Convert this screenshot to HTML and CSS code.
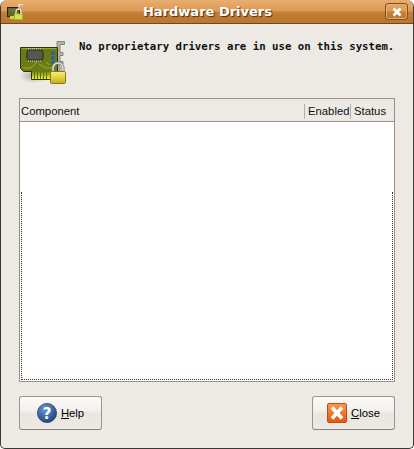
FILE: index.html
```html
<!DOCTYPE html>
<html lang="en">
<head>
    <meta charset="UTF-8">
    <link rel="stylesheet" href="styles.css">
    <title>Hardware Drivers</title>
</head>
<body>
    <div class="window">
        <div class="titlebar">
            <svg class="title-icon" width="16" height="16" viewBox="0 0 16 16">
                <rect x="0.500" y="3.500" width="12" height="9" fill="#5d6c16" stroke="#23270a"/>
                <rect x="2" y="5" width="7" height="3" fill="#6a6a64"/>
                <path d="M3 13.500h6" stroke="#cfd835" stroke-width="3"/>
                <path d="M12 6V0.500h4" stroke="#e8e6e0" fill="none" stroke-width="1.400"/>
                <rect x="7.500" y="10" width="8" height="5.500" fill="#dce34a" stroke="#a8b02a"/>
                <path d="M9 10V7.500a2.500 2.500 0 0 1 5 0V10" stroke="#eeece6" fill="none" stroke-width="1.200"/>
            </svg>
            <span class="title-text">Hardware Drivers</span>
            <div class="title-close">
                <svg width="12" height="12" viewBox="0 0 12 12"><path d="M2.500 2.500l7 7M9.500 2.500l-7 7" stroke="#fff" stroke-width="2.800"/></svg>
            </div>
        </div>
        <div class="content">
            <div class="message">
                <svg class="hw-icon" width="50" height="50" viewBox="0 0 50 50">
                    <defs>
                        <linearGradient id="teeth" x1="0" y1="0" x2="0" y2="1">
                            <stop offset="0" stop-color="#7c8c14"/>
                            <stop offset="1" stop-color="#f2f23a"/>
                        </linearGradient>
                        <linearGradient id="lockBody" x1="0" y1="0" x2="0" y2="1">
                            <stop offset="0" stop-color="#f4ec8c"/>
                            <stop offset="0.500" stop-color="#e2d23c"/>
                            <stop offset="1" stop-color="#c4ac1c"/>
                        </linearGradient>
                        <radialGradient id="boardShadow">
                            <stop offset="0" stop-color="#a8a59f"/>
                            <stop offset="1" stop-color="#edeae5"/>
                        </radialGradient>
                    </defs>
                    <ellipse cx="15" cy="36" rx="15" ry="7" fill="url(#boardShadow)"/>
                    <path d="M38 1.500h7.500v3H41v8h3v3h-3v6h3v3h-3v8h-3z" fill="#b4b4ae" stroke="#77776f" stroke-width="0.800"/>
                    <path d="M1.500 7.500H38.500V31.500H32.500V39.500H12.500V31.500H4.500L1.500 28.500z" fill="#6b7b14" stroke="#2e3308"/>
                    <path d="M2.500 8.500H37.500" stroke="#97a62c"/>
                    <path d="M13 32h19v7H13z" fill="url(#teeth)"/>
                    <path d="M15.500 32v7M18.500 32v7M21.500 32v7M24.500 32v7M27.500 32v7" stroke="#5f6c0e"/>
                    <path d="M4 28h8l6-6M20 24l7 4h8M27 22l4 3" stroke="#9dac2a" fill="none"/>
                    <path d="M9.500 8.500v1.500M11.500 8.500v1.500M13.500 8.500v1.500M15.500 8.500v1.500M17.500 8.500v1.500M19.500 8.500v1.500M21.500 8.500v1.500M9.500 20v1.500M11.500 20v1.500M13.500 20v1.500M15.500 20v1.500M17.500 20v1.500M19.500 20v1.500M21.500 20v1.500" stroke="#e4e4e0"/>
                    <rect x="8" y="10" width="16" height="10" rx="2" fill="#55584f" stroke="#26271f"/>
                    <circle cx="34" cy="13" r="2" fill="#2b5ea8"/>
                    <circle cx="34" cy="18" r="2" fill="#2b5ea8"/>
                    <circle cx="34" cy="23" r="2" fill="#2b5ea8"/>
                    <path d="M34 31v-3a5 5 0 0 1 10 0v3" stroke="#7f7f78" stroke-width="3" fill="none"/>
                    <path d="M34 31v-3a5 5 0 0 1 10 0v3" stroke="#e2e2dc" stroke-width="1.400" fill="none"/>
                    <rect x="31.500" y="31.500" width="15" height="12" rx="1" fill="url(#lockBody)" stroke="#8a7a14"/>
                </svg>
                <p class="message-text">No proprietary drivers are in use on this system.</p>
            </div>
            <div class="list">
                <div class="list-head">
                    <div class="col col-component">Component</div>
                    <div class="col col-enabled">Enabled</div>
                    <div class="col col-status">Status</div>
                </div>
                <div class="list-body">
                    <div class="list-spacer"></div>
                    <div class="list-focus"></div>
                </div>
            </div>
            <div class="actions">
                <button class="btn">
                    <svg width="20" height="20" viewBox="0 0 20 20">
                        <defs>
                            <radialGradient id="helpBlue" cx="0.4" cy="0.3" r="0.8">
                                <stop offset="0" stop-color="#6b9ad8"/>
                                <stop offset="1" stop-color="#17386f"/>
                            </radialGradient>
                        </defs>
                        <circle cx="10" cy="10" r="9.600" fill="url(#helpBlue)" stroke="#2c4670" stroke-width="0.800"/>
                        <text x="10" y="16" class="help-mark">?</text>
                    </svg>
                    <span><u>H</u>elp</span>
                </button>
                <button class="btn">
                    <svg width="20" height="20" viewBox="0 0 20 20">
                        <defs>
                            <linearGradient id="closeOrange" x1="0" y1="0" x2="0" y2="1">
                                <stop offset="0" stop-color="#f99a50"/>
                                <stop offset="1" stop-color="#e2560c"/>
                            </linearGradient>
                        </defs>
                        <rect x="0.500" y="0.500" width="19" height="19" rx="1.500" fill="url(#closeOrange)" stroke="#b9510f"/>
                        <path d="M5 4.500l10 11M15 4.500l-10 11" stroke="#fff" stroke-width="3.600"/>
                    </svg>
                    <span><u>C</u>lose</span>
                </button>
            </div>
        </div>
    </div>
</body>
</html>
```

FILE: styles.css
```css
html, body {
    margin: 0;
    height: 100%;
    background-color: #fff;
}

.window {
    box-sizing: border-box;
    width: 414px;
    height: 449px;
    display: flex;
    flex-direction: column;
    background-color: #edeae5;
    border: 1px solid #3a3935;
    border-top: 0;
    border-radius: 7px 7px 5px 5px;
    overflow: hidden;
    font-family: "Liberation Sans", sans-serif;
    font-size: 11.3px;
    color: #101010;
}

.titlebar {
    height: 23px;
    flex: none;
    display: flex;
    align-items: center;
    padding: 0 5px 0 6px;
    background: linear-gradient(#e9ad6d 0%, #dd9c58 45%, #c47d35 55%, #b9772f 100%);
    border-bottom: 1px solid #6f4a20;
}

.title-icon {
    flex: none;
    margin-right: 7px;
}

.title-text {
    flex: 1;
    text-align: center;
    font-family: "DejaVu Sans", sans-serif;
    font-size: 13px;
    font-weight: bold;
    color: #fff;
    text-shadow: 1px 1px 1px #4a3010;
}

.title-close {
    box-sizing: border-box;
    width: 23px;
    height: 17px;
    display: flex;
    align-items: center;
    justify-content: center;
    border: 1px solid #7c5020;
    border-radius: 3px;
    box-shadow: inset 0 0 0 1px #e0ad75;
}

.content {
    flex: 1;
    display: flex;
    flex-direction: column;
    padding: 14px 18px 18px;
    min-height: 0;
}

.message {
    display: flex;
    height: 60px;
    flex: none;
}

.hw-icon {
    flex: none;
    margin-top: 2px;
}

.message-text {
    margin: 2px 0 0 10px;
    font-family: "DejaVu Sans Mono", monospace;
    font-size: 10.7px;
    font-weight: bold;
    white-space: nowrap;
}

.list {
    height: 284px;
    flex: none;
    box-sizing: border-box;
    display: flex;
    flex-direction: column;
    border: 1px solid #9a9284;
    background-color: #fff;
}

.list-head {
    box-sizing: border-box;
    height: 23px;
    flex: none;
    display: flex;
    align-items: center;
    padding-top: 3px;
    background-color: #edeae5;
    border-bottom: 1px solid #9a9284;
}

.col {
    padding-left: 1px;
    line-height: 15px;
}

.col-component {
    flex: 1;
}

.col-enabled {
    box-sizing: border-box;
    width: 46px;
    padding-left: 3px;
    border-left: 1px solid #b5b0a5;
}

.col-status {
    box-sizing: border-box;
    width: 44px;
    padding-left: 3px;
    border-left: 1px solid #b5b0a5;
}

.list-body {
    flex: 1;
    display: flex;
    flex-direction: column;
    padding: 0 1px 1px 1px;
}

.list-spacer {
    height: 70px;
    flex: none;
}

.list-focus {
    flex: 1;
    border: 1px dotted #333;
    border-top: 0;
}

.actions {
    display: flex;
    justify-content: space-between;
    margin-top: 14px;
}

.btn {
    width: 83px;
    height: 34px;
    display: flex;
    align-items: center;
    justify-content: center;
    gap: 4px;
    padding: 0;
    font: inherit;
    color: #000;
    border: 1px solid #9a958a;
    border-bottom-color: #85807a;
    border-radius: 3px;
    background: linear-gradient(#fafaf8 0%, #f3f1ed 42%, #e9e6e0 52%, #edeae5 100%);
}

.help-mark {
    font-family: "DejaVu Sans", sans-serif;
    font-size: 15px;
    font-weight: bold;
    fill: #fff;
    text-anchor: middle;
}
```
